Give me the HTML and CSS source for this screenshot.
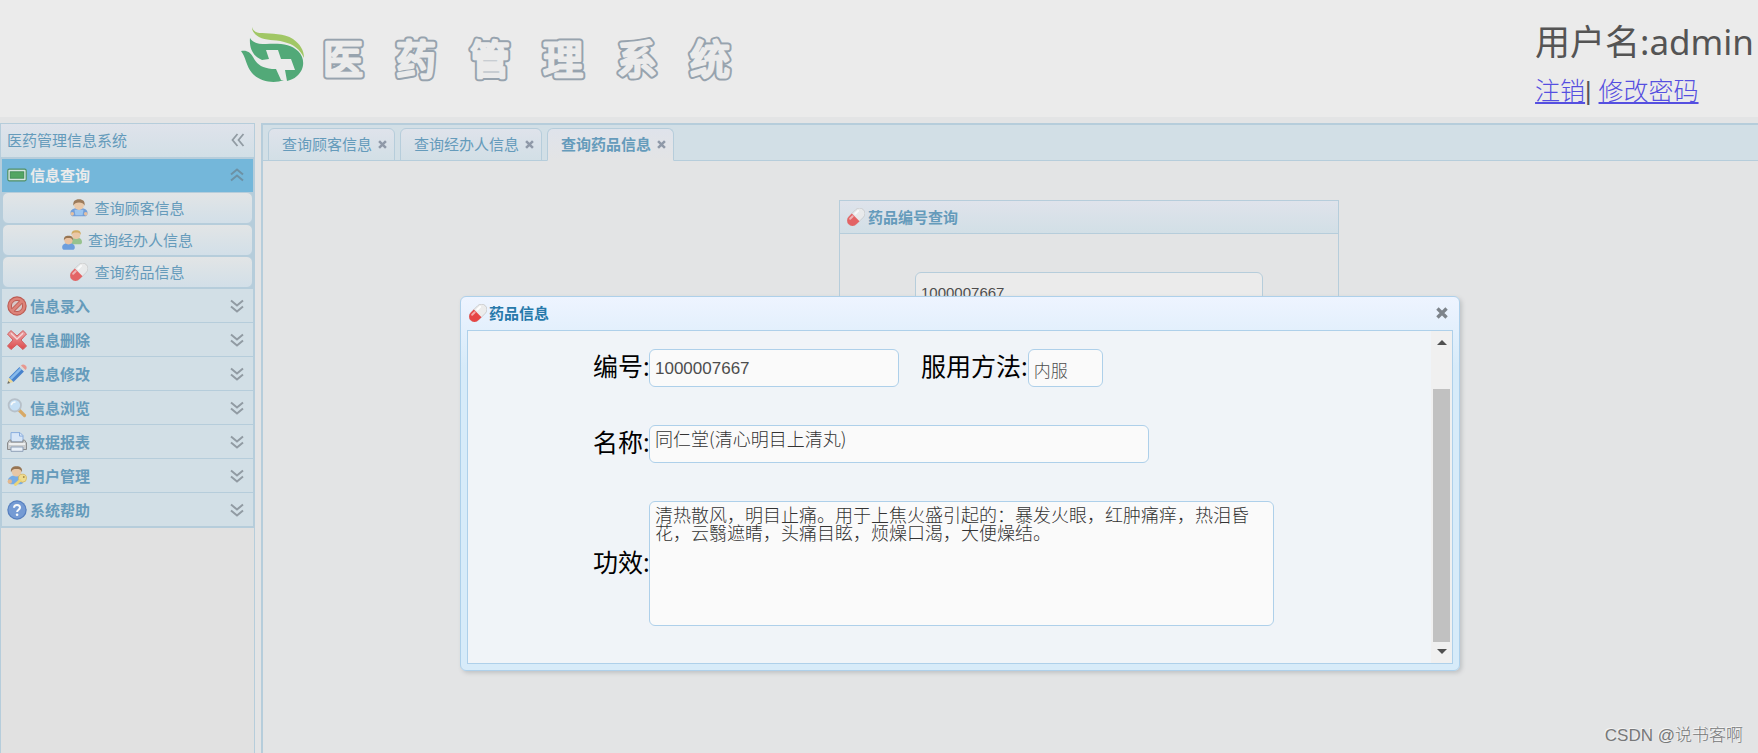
FILE: index.html
```html
<!DOCTYPE html>
<html lang="zh-CN">
<head>
<meta charset="utf-8">
<title>医药管理系统</title>
<link rel="stylesheet" href="styles.css">
</head>
<body>
<svg class="defs" width="0" height="0" aria-hidden="true">
  <defs>
    <linearGradient id="redGrad" x1="0" y1="0" x2="0" y2="1"><stop offset="0" stop-color="#f0a0a0"/><stop offset="1" stop-color="#e03030"/></linearGradient>
    <symbol id="pill" viewBox="0 0 20 20">
      <g transform="rotate(-45 10 10)">
        <rect x="-1.500" y="4" width="23" height="12" rx="6" fill="#ececec" stroke="#bdbdbd" stroke-width=".7"/>
        <path d="M9.500 4h-5a6 6 0 0 0 0 12h5z" fill="#e64545"/>
        <path d="M4 6.800h4" stroke="#f4a9a9" stroke-width="2.200" stroke-linecap="round"/>
        <path d="M12 6.800h4.500" stroke="#fff" stroke-width="2.200" stroke-linecap="round"/>
      </g>
    </symbol>
    <symbol id="user" viewBox="0 0 20 20">
      <path d="M.5 15.500c0-3.600 3-5.500 9.500-5.500s9.500 1.900 9.500 5.500c0 2.500-1.500 3.800-3 3.800h-13c-1.500 0-3-1.300-3-3.800z" fill="#5b8fd6"/>
      <path d="M5 12h10l-1 6H6z" fill="#8fc0f2"/>
      <circle cx="2.500" cy="16.500" r="2" fill="#e8b890"/><circle cx="17.500" cy="16.500" r="2" fill="#e8b890"/>
      <circle cx="10" cy="6.800" r="5.500" fill="#edc39c"/>
      <path d="M3.800 7.500C3 2.500 5.500.2 10 .2s7 2.300 6.200 7.300c-1-2.800-3-3.700-6.200-3.700s-5.200.9-6.200 3.700z" fill="#8c6239"/>
    </symbol>
    <symbol id="users" viewBox="0 0 20 20">
      <path d="M9 12c0-3 2-4.500 5.500-4.500S20 9 20 12c0 1.600-1 2.300-2 2.300H11c-1 0-2-.8-2-2.300z" fill="#8cbd80"/>
      <circle cx="14.200" cy="4.900" r="4" fill="#edc39c"/>
      <path d="M9.600 5C9.200 1.500 11.200.2 14.200.2S19.200 1.500 18.800 5c-.8-2-2-2.400-4.600-2.400S10.400 3 9.600 5z" fill="#cfa24e"/>
      <path d="M.2 17.500c0-3 2.300-4.500 6.300-4.500s6.300 1.500 6.300 4.500c0 1.500-1 2.300-2.200 2.300H2.400c-1.200 0-2.200-.8-2.200-2.300z" fill="#5b93dc"/>
      <circle cx="6.500" cy="10.300" r="4.100" fill="#edbd95"/>
      <path d="M2 10.500C1.500 7 3.500 5.700 6.500 5.700S11.500 7 11 10.500c-.8-2-2-2.400-4.500-2.400s-3.700.4-4.500 2.400z" fill="#8c6239"/>
    </symbol>
    <symbol id="screen" viewBox="0 0 20 20">
      <rect x=".8" y="4.200" width="18.400" height="11.600" rx="1.500" fill="#e8efe2" stroke="#4a8a52" stroke-width="1.200"/>
      <rect x="3.200" y="6.800" width="13.600" height="6.400" fill="#4ea34f" stroke="#2f7d36" stroke-width=".8"/>
    </symbol>
    <symbol id="ban" viewBox="0 0 20 20">
      <circle cx="10" cy="10" r="9.700" fill="#b9453a"/><circle cx="10" cy="10" r="8.600" fill="#df7466"/>
      <circle cx="10" cy="10" r="5.600" fill="#d9c6c3" stroke="#b9453a" stroke-width="1"/>
      <path d="m5.800 14.200 8.400-8.400" stroke="#b9453a" stroke-width="4.400"/><path d="m5 15 10-10" stroke="#df7466" stroke-width="2.600"/>
    </symbol>
    <symbol id="cross" viewBox="0 0 20 20">
      <path d="M4 .6 10 6 16 .6 19.500 4 14 10l5.500 6-3.500 3.500-6-5.200-6 5.200L.5 16 6 10 .5 4z" fill="url(#redGrad)" stroke="#d04848" stroke-width="1" stroke-linejoin="round"/>
      <path d="M4 3.200 10 9l6-5.800" fill="none" stroke="#fbd5d5" stroke-width="1.400"/>
    </symbol>
    <symbol id="pencil" viewBox="0 0 20 20">
      <path d="M.5 19.500 2 13.500l4.500 4.500z" fill="#f0d68a"/><path d="M.3 19.700 1.200 17l2 2z" fill="#555"/>
      <path d="M2 13.500 12.500 3 17 7.500 6.500 18z" fill="#2f72c8"/><path d="M2.800 14 13.300 3.500l1.700 1.700L4.500 15.700z" fill="#7bb4ee"/>
      <path d="m12.500 3 1.500-1.500L18.500 6 17 7.500z" fill="#d9d9d9"/><path d="M14 1.500C15.200.2 17 .2 18.500 1.500s1.600 3 0 4.500z" fill="#ec8c80"/>
    </symbol>
    <symbol id="search" viewBox="0 0 20 20">
      <path d="m12.500 12.500 5 5" stroke="#d9a050" stroke-width="3.200" stroke-linecap="round"/>
      <circle cx="7.800" cy="7.300" r="6.200" fill="#c3e0f8" stroke="#b2bbc5" stroke-width="1.800"/>
      <path d="M4.500 6.500C5 4.800 6.300 4 8 4" fill="none" stroke="#fff" stroke-width="1.600" stroke-linecap="round"/>
    </symbol>
    <symbol id="printer" viewBox="0 0 20 20">
      <path d="M4 .6h9l3 3V10H4z" fill="#d9e8fb" stroke="#7da5dc" stroke-width="1"/><path d="M12.500.6v3.500H16" fill="none" stroke="#7da5dc"/>
      <path d="M2.500 8H4v2h12V8h1.500l2 3v6.500H.5V11z" fill="#c9c9c9" stroke="#7f7f7f"/>
      <path d="M2 12h16" stroke="#f6f6f6" stroke-width="1.800"/><path d="M4 15h12v4.300H4z" fill="#eef4fc" stroke="#8295b0"/>
    </symbol>
    <symbol id="userkey" viewBox="0 0 20 20">
      <path d="M1 15c0-3.600 3-5.500 7.500-5.500s8 1.900 8 5.500c0 2-1.500 3.300-3 3.300H4c-1.500 0-3-1.300-3-3.300z" fill="#69a4e4"/>
      <circle cx="2.800" cy="15.500" r="2.200" fill="#e8b27e"/>
      <circle cx="9.500" cy="5.800" r="4.800" fill="#edc39c"/>
      <path d="M4 6.300C3.300 2 5.700.3 9.500.3S15.700 2 15 6.300c-1-2.800-2.900-3.200-5.500-3.200S5 3.500 4 6.300z" fill="#8c6239"/>
      <circle cx="15.500" cy="12.200" r="4" fill="#f4dc80" stroke="#d8ae45" stroke-width=".8"/><circle cx="16.800" cy="11" r=".9" fill="#9c7a28"/>
      <path d="m13 14.500-4.500 4" stroke="#f0d468" stroke-width="3" stroke-linecap="round"/>
    </symbol>
    <symbol id="help" viewBox="0 0 20 20">
      <circle cx="10" cy="10" r="9.700" fill="#416fb8"/><circle cx="10" cy="10" r="8.500" fill="#6590d2"/>
      <path d="M7 7.800C7 5.900 8.300 5 10 5s3 1 3 2.600c0 2-2.900 2.200-2.900 4.400" fill="none" stroke="#fff" stroke-width="2"/><circle cx="10.100" cy="14.800" r="1.300" fill="#fff"/>
    </symbol>
    <symbol id="down" viewBox="0 0 14 14"><path d="m1 1.500 6 5 6-5M1 7.500l6 5 6-5" fill="none" stroke="currentColor" stroke-width="2"/></symbol>
    <symbol id="up" viewBox="0 0 14 14"><path d="m1 6.500 6-5 6 5M1 12.500l6-5 6 5" fill="none" stroke="currentColor" stroke-width="2"/></symbol>
    <symbol id="left" viewBox="0 0 14 14"><path d="m6.500 1-5 6 5 6M12.500 1l-5 6 5 6" fill="none" stroke="currentColor" stroke-width="1.800"/></symbol>
    <symbol id="close" viewBox="0 0 10 10"><path d="m1.200 1.200 7.600 7.600M8.800 1.200 1.200 8.800" fill="none" stroke="currentColor" stroke-width="2.800"/></symbol>
  </defs>
</svg>

<div class="app">
  <header class="banner">
    <div class="brand">
      <svg class="brand-mark" viewBox="0 0 64 56" aria-hidden="true">
        <path d="M11 1c1 4 4 6 10 6 10 1 22 0 31 6 7 5 11 11 11 19-4-9-11-14-20-16-10-3-18-1-25-5-5-3-7-6-7-10z" fill="#a1c765"/>
        <path d="M9 12c3 5 8 6 16 6 13-1 25 0 32 7 8 8 6 19-1 25-3 3-7 4-10 5l-2-11h10l-4-11H40l-3-9H25l3 9-7 1C13 31 8 23 9 12z" fill="#52a978"/>
        <path d="M0 25c6-1 9 1 12 6 4 8 9 11 19 12l4 0 5 11 3 0C33 58 19 56 11 47 5 40 5 31 0 25z" fill="#52a978"/>
      </svg>
      <h1>
        <svg class="brand-name" viewBox="0 0 420 50">
          <defs><text id="brand-text" x="3 76 150 223 297 370" y="40">医药管理系统</text></defs>
          <use class="brand-edge" href="#brand-text"/>
          <use class="brand-face" href="#brand-text"/>
        </svg>
      </h1>
    </div>
    <div class="account">
      <div class="account-name">用户名:admin</div>
      <div class="account-links"><a href="#">注销</a>| <a href="#">修改密码</a></div>
    </div>
  </header>

  <div class="workspace">
    <nav class="sidebar">
      <div class="side-title"><span>医药管理信息系统</span><svg class="arrow"><use href="#left"/></svg></div>
      <div class="accordion">
        <button class="group group-open"><svg class="icon"><use href="#screen"/></svg><span>信息查询</span><svg class="arrow"><use href="#up"/></svg></button>
        <div class="links">
          <button class="link"><svg class="icon-s"><use href="#user"/></svg>查询顾客信息</button>
          <button class="link"><svg class="icon"><use href="#users"/></svg>查询经办人信息</button>
          <button class="link"><svg class="icon-s"><use href="#pill"/></svg>查询药品信息</button>
        </div>
        <button class="group"><svg class="icon"><use href="#ban"/></svg><span>信息录入</span><svg class="arrow"><use href="#down"/></svg></button>
        <button class="group"><svg class="icon"><use href="#cross"/></svg><span>信息删除</span><svg class="arrow"><use href="#down"/></svg></button>
        <button class="group"><svg class="icon"><use href="#pencil"/></svg><span>信息修改</span><svg class="arrow"><use href="#down"/></svg></button>
        <button class="group"><svg class="icon"><use href="#search"/></svg><span>信息浏览</span><svg class="arrow"><use href="#down"/></svg></button>
        <button class="group"><svg class="icon"><use href="#printer"/></svg><span>数据报表</span><svg class="arrow"><use href="#down"/></svg></button>
        <button class="group"><svg class="icon"><use href="#userkey"/></svg><span>用户管理</span><svg class="arrow"><use href="#down"/></svg></button>
        <button class="group"><svg class="icon"><use href="#help"/></svg><span>系统帮助</span><svg class="arrow"><use href="#down"/></svg></button>
      </div>
    </nav>

    <main class="content">
      <div class="tabs" role="tablist">
        <button class="tab" role="tab">查询顾客信息<svg class="tab-x"><use href="#close"/></svg></button>
        <button class="tab" role="tab">查询经办人信息<svg class="tab-x"><use href="#close"/></svg></button>
        <button class="tab tab-on" role="tab" aria-selected="true">查询药品信息<svg class="tab-x"><use href="#close"/></svg></button>
      </div>
      <div class="pane">
        <section class="card">
          <h2 class="card-title"><svg class="icon-s"><use href="#pill"/></svg>药品编号查询</h2>
          <div class="card-body"><input class="box box-query" type="text" value="1000007667" aria-label="药品编号"></div>
        </section>
      </div>
    </main>
  </div>
</div>

<section class="dialog" role="dialog" aria-labelledby="dlg-title">
  <div class="dialog-head">
    <svg class="icon-s"><use href="#pill"/></svg>
    <h2 id="dlg-title">药品信息</h2>
    <button class="dialog-x" aria-label="关闭"><svg><use href="#close"/></svg></button>
  </div>
  <div class="dialog-body">
    <form class="form">
      <div class="row">
        <label for="code">编号:</label><input class="box box-code" id="code" type="text" value="1000007667">
        <label class="label-next" for="usage">服用方法:</label><input class="box box-usage" id="usage" type="text" value="内服">
      </div>
      <div class="row"><label for="name">名称:</label><textarea class="box area area-name" id="name">同仁堂(清心明目上清丸)</textarea></div>
      <div class="row"><label for="effect">功效:</label><textarea class="box area area-effect" id="effect">清热散风，明目止痛。用于上焦火盛引起的：暴发火眼，红肿痛痒，热泪昏花，云翳遮睛，头痛目眩，烦燥口渴，大便燥结。</textarea></div>
    </form>
    <div class="scroll" aria-hidden="true">
      <span class="scroll-up"></span>
      <span class="scroll-track"><span class="scroll-thumb"></span></span>
      <span class="scroll-down"></span>
    </div>
  </div>
</section>
<div class="watermark">CSDN @说书客啊</div>
</body>
</html>
```
FILE: styles.css
```css
* { box-sizing: border-box; }
body {
  margin: 0;
  overflow: hidden;
  background: #e3e4e5;
  font: 15px/20px "Noto Sans", "Noto Sans CJK SC", sans-serif;
  color: #659bbb;
}
button, input, textarea { font: inherit; color: inherit; margin: 0; }
button { border: 0; background: none; padding: 0; }
h1, h2 { margin: 0; font-size: inherit; }
svg { display: block; flex: none; }
.defs { position: absolute; }
.app { display: flex; flex-direction: column; height: 100vh; }

.banner {
  display: flex;
  justify-content: space-between;
  height: 117px;
  padding: 0 4px 0 241px;
  background: #ebebeb;
}
.brand { display: flex; align-items: flex-start; gap: 15px; padding-top: 26px; }
.brand-mark { width: 64px; height: 56px; }
.brand-name {
  width: 420px;
  height: 50px;
  margin-top: 8px;
  font: 400 40px "Noto Sans CJK SC", sans-serif;
  stroke-linejoin: round;
}
.brand-edge { fill: #97a3ae; stroke: #97a3ae; stroke-width: 7px; }
.brand-face { fill: #ebebeb; stroke: #ebebeb; stroke-width: 3px; }
.account { padding-top: 18px; color: #545454; }
.account-name { font-size: 35px; line-height: 48px; }
.account-links { font: 300 25px/50px "Liberation Sans", "Noto Sans CJK SC", sans-serif; }
.account-links a { color: #554fe0; }

.workspace { display: flex; flex: 1; gap: 6px; padding-top: 6px; min-height: 0; }
.sidebar { width: 255px; flex: none; border: 1px solid #b6cddb; border-bottom: 0; background: #e1e1e1; }
.side-title {
  display: flex;
  align-items: center;
  justify-content: space-between;
  height: 34px;
  padding: 0 9px 1px 6px;
  border-bottom: 1px solid #b6cddb;
  background: linear-gradient(#dfe3eb, #d2dfe6);
}
.arrow { width: 14px; height: 14px; color: #919ba3; }
.accordion { border: 1px solid #b6cddb; border-width: 1px 1px 2px; }
.group {
  display: flex;
  align-items: center;
  gap: 3px;
  width: 100%;
  height: 34px;
  padding: 0 9px 0 5px;
  border-top: 1px solid #b6cddb;
  background: #d2dfe6;
  font-weight: 700;
}
.group .arrow { margin-left: auto; }
.group-open { height: 33px; padding-bottom: 1px; border-top: 0; background: #74b7da; color: #ebebeb; }
.group-open .arrow { color: #6d91a5; }
.icon { width: 20px; height: 20px; opacity: .85; }
.icon-s { width: 18px; height: 18px; opacity: .8; }
.links { background: #b6cddb; }
.link {
  display: flex;
  align-items: center;
  justify-content: center;
  gap: 6px;
  width: 100%;
  height: 32px;
  border: 1px solid #b6cddb;
  border-radius: 6px;
  background: linear-gradient(#e2e5e6, #d2dfe8);
}

.content { flex: 1; display: flex; flex-direction: column; min-width: 0; border: solid #b6cddb; border-width: 2px 0 0 2px; }
.tabs { display: flex; gap: 5px; height: 36px; padding: 3px 0 0 5px; background: #d2dfe6; border-bottom: 1px solid #b6cddb; }
.tab {
  display: flex;
  align-items: center;
  gap: 6px;
  height: 33px;
  padding: 0 7px 1px 13px;
  border: 1px solid #b6cddb;
  border-radius: 6px 6px 0 0;
  background: linear-gradient(#dfe3eb, #d2dfe6);
}
.tab-on { font-weight: 700; border-bottom-color: #e3e4e5; background: linear-gradient(#dfe3eb, #e3e4e5); }
.tab-x { width: 9px; height: 9px; color: #8f99a8; }
.pane { display: flex; justify-content: center; padding: 39px 0 0 157px; }
.card { width: 500px; height: 240px; border: 1px solid #b6cddb; }
.card-title {
  display: flex;
  align-items: center;
  gap: 3px;
  height: 33px;
  padding-left: 7px;
  border-bottom: 1px solid #b6cddb;
  background: linear-gradient(#dfe3eb, #d2dfe6);
}
.card-body { padding: 38px 75px; }

.box {
  border: 1px solid #aed0ea;
  border-radius: 6px;
  padding: 2px 5px 0;
  height: 38px;
  background: #fafafa;
  font: 16px/20px "Liberation Sans", "Noto Sans CJK SC", sans-serif;
  color: #4d4d4d;
}
.box-query { width: 100%; padding-top: 3px; font-size: 15px; background: #ebebeb; border-color: #b6cddb; }

.dialog {
  position: absolute;
  left: 460px;
  top: 296px;
  width: 1000px;
  padding: 0 6px 6px;
  border: 1px solid #aed0ea;
  border-radius: 6px;
  background: linear-gradient(#eef4ff, #d7ebf9 70px);
  box-shadow: 2px 2px 4px #bfc2c4;
}
.dialog-head { display: flex; align-items: center; gap: 2px; height: 33px; padding: 0 0 1px 2px; color: #2779aa; }
.dialog-head .icon-s { opacity: 1; }
.dialog-x { margin-left: auto; padding-right: 5px; color: #7d848b; }
.dialog-x svg { width: 12px; height: 12px; }
.dialog-body { display: flex; height: 334px; border: 1px solid #aed0ea; background: #f0f4f8; }
.form { flex: 1; display: flex; flex-direction: column; gap: 38px; padding: 18px 0 0 125px; }
.row { display: flex; align-items: center; font-size: 25px; line-height: 32px; color: #000; }
.row label { width: 56px; flex: none; padding-bottom: 4px; white-space: nowrap; }
.row .label-next { width: auto; margin-left: 22px; }
.box-code { width: 250px; font-size: 17px; }
.box-usage { width: 75px; font-size: 17px; font-weight: 300; }
.area { resize: none; overflow: hidden; padding: 3px 8px 0 5px; font: 300 18px/18px "Noto Sans CJK SC", sans-serif; color: #333; }
.area-name { width: 500px; }
.area-effect { width: 625px; height: 125px; }
.scroll { display: flex; flex-direction: column; align-items: center; width: 21px; background: #f0f0f0; }
.scroll-up, .scroll-down { border: 5px solid transparent; }
.scroll-up { margin: 4px 0 9px; border-bottom-color: #505050; }
.scroll-down { margin: 7px 0 4px; border-top-color: #505050; }
.scroll-track { flex: 1; display: flex; align-items: flex-end; }
.scroll-thumb { width: 17px; height: 88%; background: #c1c1c1; }
.watermark {
  position: absolute;
  right: 15px;
  bottom: 5px;
  font: 300 17px/24px "Liberation Sans", "Noto Sans CJK SC", sans-serif;
  color: #777879;
  text-shadow: -1px -1px #f4f4f4;
}
```
